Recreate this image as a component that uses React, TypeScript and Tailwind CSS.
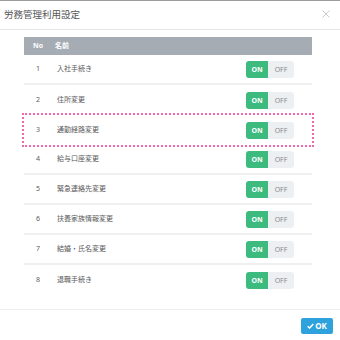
const items = [
  "入社手続き",
  "住所変更",
  "通勤経路変更",
  "給与口座変更",
  "緊急連絡先変更",
  "扶養家族情報変更",
  "結婚・氏名変更",
  "退職手続き",
];

function Toggle() {
  return (
    <div className="flex h-[17px] w-[48px] overflow-hidden rounded-[3px] text-[7px] leading-none">
      <div className="flex w-[22px] items-center justify-center bg-[#3dba7e] font-bold text-white">
        ON
      </div>
      <div className="flex flex-1 items-center justify-center bg-[#edf0f2] text-[#8a8a8a]">
        OFF
      </div>
    </div>
  );
}

export default function App() {
  return (
    <div
      className="relative h-[340px] w-[340px] overflow-hidden bg-white"
      style={{ fontFamily: '"Noto Sans", "Noto Sans CJK JP", sans-serif' }}
    >
      <div className="h-px bg-[#9c9c9c]" />
      <div className="flex h-[29px] items-center justify-between border-b border-[#e6e6e6] pl-[4px] pr-[10px]">
        <span className="text-[9.5px] text-[#555]">労務管理利用設定</span>
        <svg width="8" height="8" viewBox="0 0 8 8" className="mb-[2px]">
          <path d="M0.5 0.5 L7.5 7.5 M7.5 0.5 L0.5 7.5" stroke="#c4c4c4" strokeWidth="0.9" />
        </svg>
      </div>

      <div className="pl-[24px] pr-[28px] pt-[7px] pb-[14px] border-b border-[#ececec]">
        <div className="flex h-[18px] items-center bg-[#a5acb4] text-[7px] font-bold text-white">
          <div className="w-[28px] text-center">No</div>
          <div className="pl-[3px]">名前</div>
        </div>
        {items.map((name, i) => (
          <div
            key={name}
            className={
              "flex h-[30px] items-center pr-[18px] text-[7px] text-[#5a5a5a] " +
              (i === 2
                ? "outline-2 outline-dotted outline-[#f067b0] outline-offset-[0px] "
                : "") +
              (i < items.length - 1 && i !== 1 && i !== 2 ? "border-b-2 border-[#f0f0f0]" : "")
            }
          >
            <div className="w-[28px] text-center">{i + 1}</div>
            <div className="flex-1 pl-[5px]">{name}</div>
            <Toggle />
          </div>
        ))}
      </div>

      <div className="flex justify-end pr-[7px] pt-[8px]">
        <button className="flex h-[16px] w-[32px] items-center justify-center gap-[1px] rounded-[2px] bg-[#2ea2dc] text-[8px] font-bold text-white">
          <svg width="7" height="6" viewBox="0 0 7 6">
            <path d="M0.7 3.2 L2.6 5 L6.3 0.9" fill="none" stroke="white" strokeWidth="1.5" />
          </svg>
          OK
        </button>
      </div>
    </div>
  );
}
